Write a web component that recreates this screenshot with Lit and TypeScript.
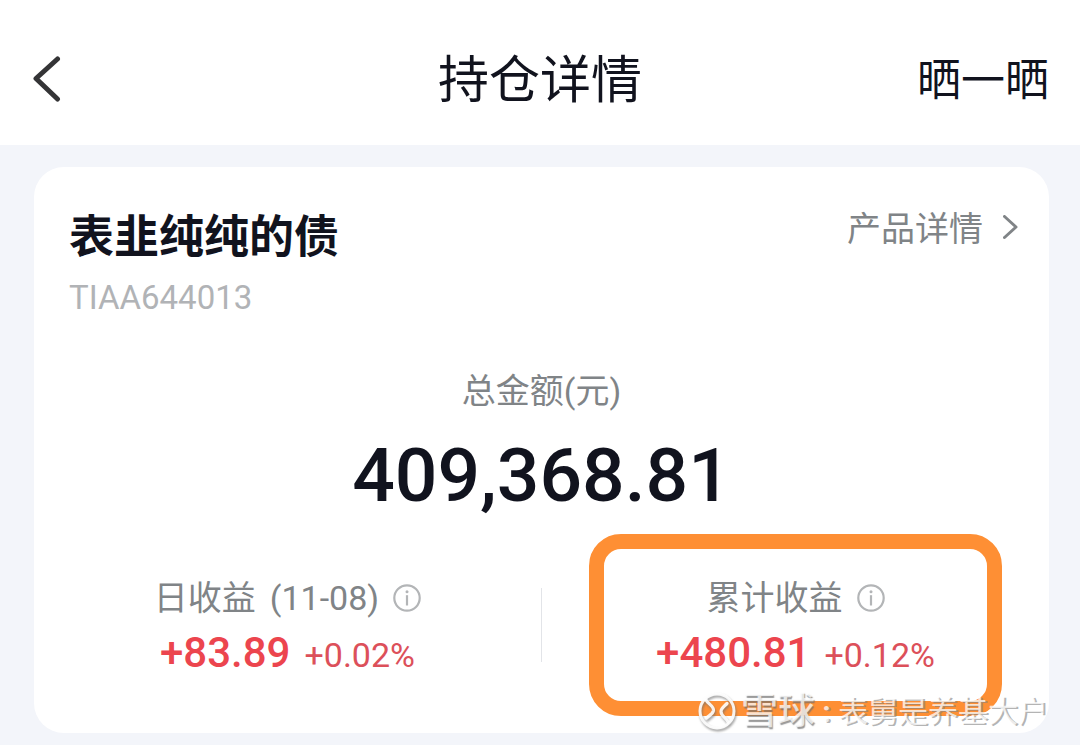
import { LitElement, html, css } from "lit";
import { customElement, property } from "lit/decorators.js";
import { classMap } from "lit/directives/class-map.js";

@customElement("gain-cell")
class GainCell extends LitElement {
  @property() label = "";
  @property() date = "";
  @property() amount = "";
  @property() rate = "";
  @property({ type: Boolean }) marked = false;

  static styles = css`
    :host {
      display: block;
    }
    .cell {
      display: flex;
      flex-direction: column;
      align-items: center;
      margin: 0 47px;
      padding: 25px 0 18px;
      border: 15px solid transparent;
      border-radius: 32px;
    }
    .marked {
      border-color: #fe8f34;
    }
    .label {
      display: flex;
      align-items: center;
      gap: 14px;
      font-size: 34px;
      line-height: 48px;
      color: #808487;
      white-space: nowrap;
    }
    .info {
      display: flex;
      padding: 0;
      border: 0;
      background: none;
      color: #b3b5b7;
    }
    .values {
      display: flex;
      align-items: baseline;
      gap: 14px;
      margin-top: 3px;
      line-height: 56px;
      font-family: Roboto, "Noto Sans CJK SC", sans-serif;
      white-space: nowrap;
    }
    .amount {
      font-size: 42px;
      font-weight: 500;
      color: #ec454e;
    }
    .rate {
      font-size: 34px;
      color: #dc505a;
    }
  `;

  render() {
    return html`
      <div class=${classMap({ cell: true, marked: this.marked })}>
        <div class="label">
          <span>${this.label}</span>
          ${this.date ? html`<span>(${this.date})</span>` : ""}
          <button class="info" aria-label="说明">
            <svg width="28" height="28" viewBox="0 0 28 28" fill="none" aria-hidden="true">
              <circle cx="14" cy="14" r="12.7" stroke="currentColor" stroke-width="2.2" />
              <circle cx="14" cy="7.8" r="1.5" fill="currentColor" />
              <path d="M14 11.2V21.5" stroke="currentColor" stroke-width="2.2" />
            </svg>
          </button>
        </div>
        <div class="values">
          <span class="amount">${this.amount}</span>
          <span class="rate">${this.rate}</span>
        </div>
      </div>
    `;
  }
}

@customElement("app-root")
class AppRoot extends LitElement {
  static styles = css`
    :host {
      display: flow-root;
      position: relative;
      min-height: 100vh;
      background: #f3f5fa;
      color: #11131e;
      font-family: Roboto, "Noto Sans CJK SC", sans-serif;
    }
    .bar {
      display: grid;
      grid-template-columns: 1fr auto 1fr;
      align-items: center;
      padding: 51px 31px 34px;
      background: #fff;
    }
    .bar button {
      padding: 0;
      border: 0;
      background: none;
      font: inherit;
      color: inherit;
    }
    .bar .back {
      display: flex;
      justify-self: start;
    }
    .title {
      margin: 0;
      font-size: 51px;
      font-weight: 400;
      line-height: 60px;
    }
    .bar .share {
      justify-self: end;
      font-size: 44px;
      line-height: 60px;
    }
    .card {
      margin: 22px 31px 12px 34px;
      padding: 43px 0 17px;
      border-radius: 30px;
      background: #fff;
    }
    .head {
      display: flex;
      justify-content: space-between;
      align-items: flex-start;
      padding: 0 31px 0 35px;
    }
    .name {
      margin: 0;
      font-size: 45px;
      font-weight: 700;
      line-height: 56px;
    }
    .code {
      margin: 12px 0 0;
      font-size: 33px;
      line-height: 40px;
      color: #b1b3b6;
    }
    .detail {
      display: flex;
      align-items: center;
      gap: 20px;
      font-size: 34px;
      line-height: 38px;
      color: #808487;
      text-decoration: none;
    }
    .total {
      margin-top: 49px;
      text-align: center;
    }
    .caption {
      margin: 0;
      font-size: 34px;
      line-height: 48px;
      color: #808487;
    }
    .sum {
      margin: 16px 0 15px;
      font-size: 75px;
      font-weight: 500;
      line-height: 88px;
    }
    .gains {
      display: grid;
      grid-template-columns: 1fr 1px 1fr;
      align-items: center;
    }
    .divider {
      height: 74px;
      background: #e2e4e8;
    }
    .watermark {
      position: absolute;
      right: 32px;
      bottom: 12px;
      display: flex;
      align-items: center;
      color: rgba(255, 255, 255, 0.75);
      font-size: 30px;
      line-height: 42px;
      text-shadow: 2px 1px 0 rgba(130, 130, 130, 0.6);
      white-space: nowrap;
      pointer-events: none;
    }
    .mark {
      margin-right: 4px;
      filter: drop-shadow(1px 2px 1px rgba(110, 110, 110, 0.7));
    }
    .brand {
      font-size: 37px;
      font-weight: 500;
      text-shadow: 1px 2px 1px rgba(110, 110, 110, 0.7);
    }
    .colon {
      width: 23px;
      text-align: center;
      font-weight: 700;
    }
  `;

  render() {
    return html`
      <header class="bar">
        <button class="back" aria-label="返回">
          <svg width="30" height="50" viewBox="0 0 30 50" fill="none" aria-hidden="true">
            <path d="M26.5 3L5 22.5L26.5 43" stroke="#343436" stroke-width="5" stroke-linecap="round" stroke-linejoin="round" />
          </svg>
        </button>
        <h1 class="title">持仓详情</h1>
        <button class="share">晒一晒</button>
      </header>
      <main class="card">
        <div class="head">
          <div>
            <h2 class="name">表韭纯纯的债</h2>
            <p class="code">TIAA644013</p>
          </div>
          <a class="detail" href="#detail">
            <span>产品详情</span>
            <svg width="15" height="28" viewBox="0 0 15 28" fill="none" aria-hidden="true">
              <path d="M1.5 1.5L13 12L1.5 22.5" stroke="currentColor" stroke-width="3" stroke-linecap="round" stroke-linejoin="round" />
            </svg>
          </a>
        </div>
        <div class="total">
          <p class="caption">总金额(元)</p>
          <p class="sum">409,368.81</p>
        </div>
        <div class="gains">
          <gain-cell label="日收益" date="11-08" amount="+83.89" rate="+0.02%"></gain-cell>
          <div class="divider"></div>
          <gain-cell label="累计收益" amount="+480.81" rate="+0.12%" marked></gain-cell>
        </div>
      </main>
      <div class="watermark">
        <svg class="mark" width="40" height="40" viewBox="0 0 40 40" fill="none" stroke="#fff" stroke-opacity="0.9" aria-hidden="true">
          <circle cx="20" cy="19" r="17" stroke-width="3" />
          <path d="M9 8C11 12 17 14 16.5 18.5C16 22 12 23.5 9.5 26" stroke-width="3.2" stroke-linecap="round" />
          <path d="M30 11.5C27 14.5 24 16 24 19.5C24 24 29 25.5 31 30" stroke-width="3.2" stroke-linecap="round" />
        </svg>
        <span class="brand">雪球</span><span class="colon">:</span><span>表舅是养基大户</span>
      </div>
    `;
  }
}
